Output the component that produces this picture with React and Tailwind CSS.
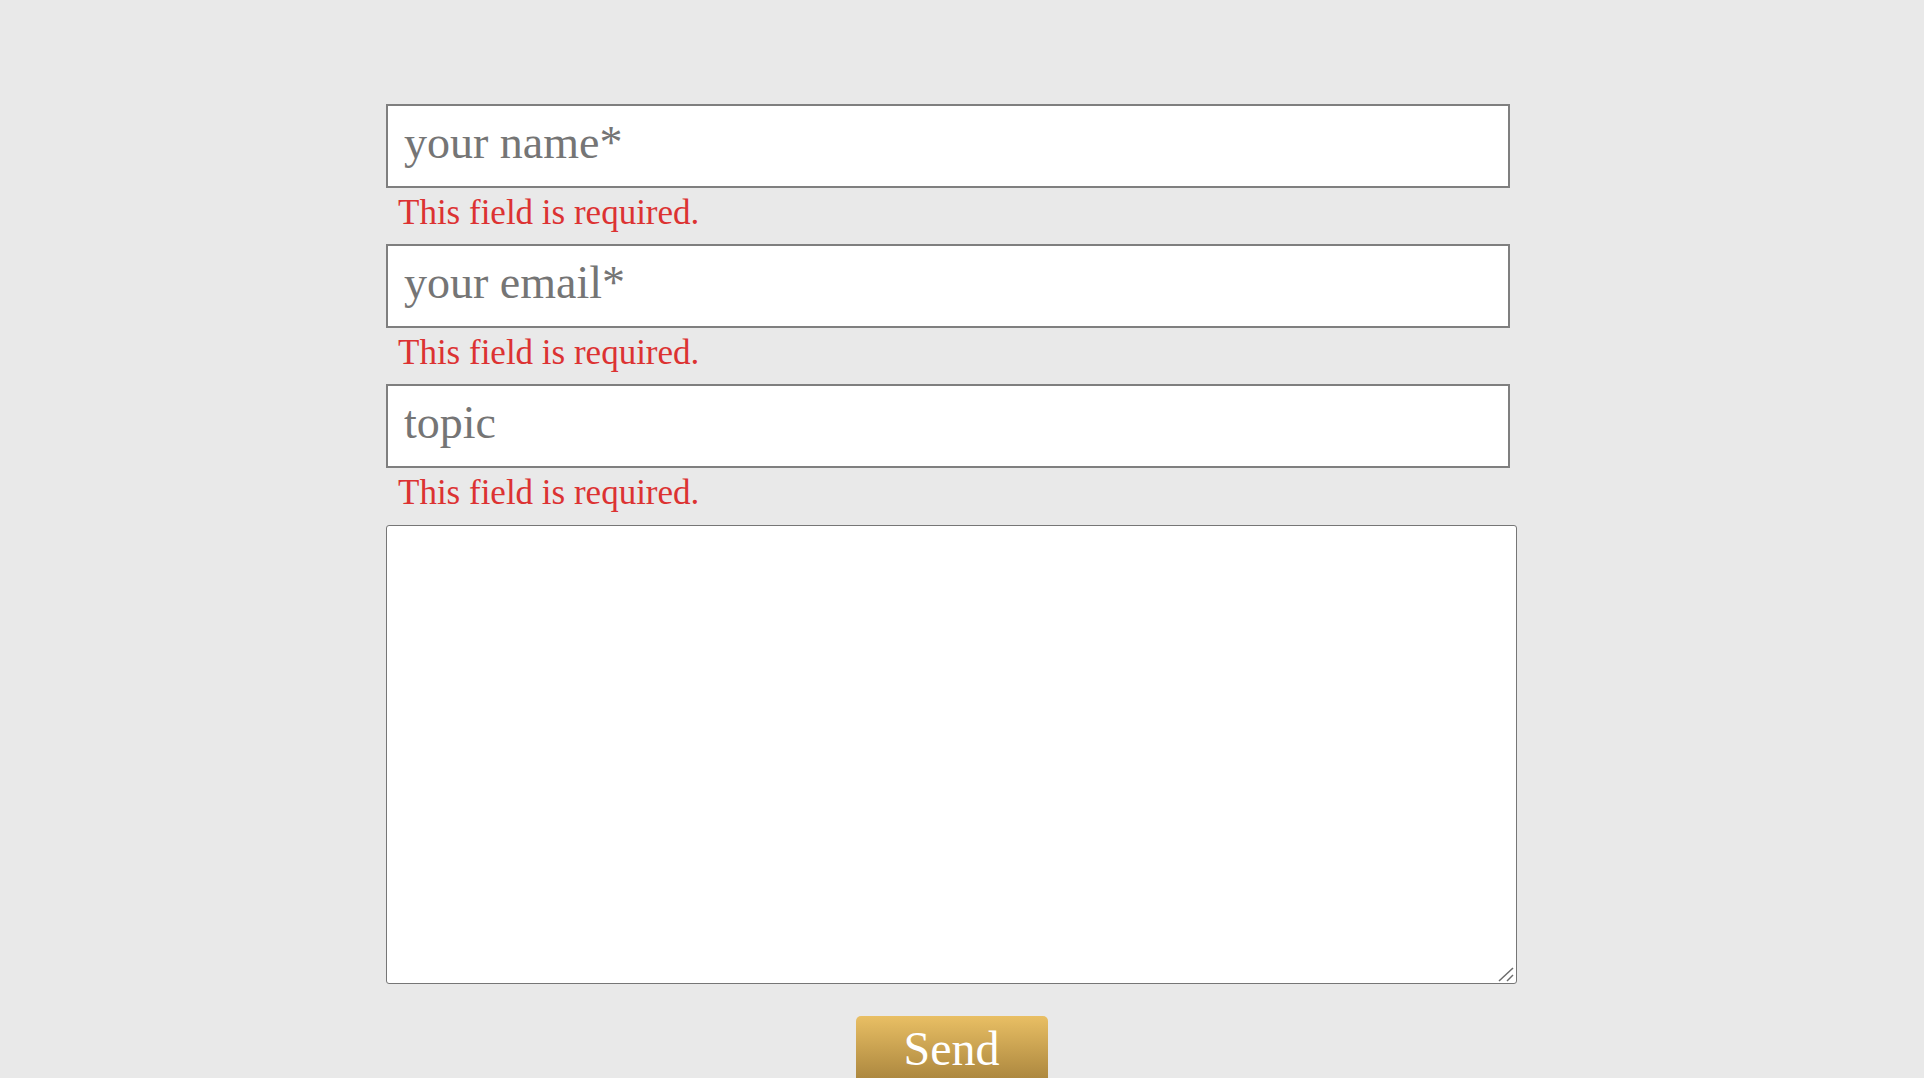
function Field({ ph, last }) {
  return (
    <div>
      <input
        type="text"
        placeholder={ph}
        className="block w-[1124px] h-[84px] box-border border-2 border-[#7f7f7f] bg-white pl-[16px] pr-4 pt-0 pb-[7px] font-['Liberation_Serif','Times_New_Roman',serif] text-[46px] text-[#757575] placeholder:text-[#757575] outline-none"
      />
      <div
        className={
          last
            ? "h-[57px] pl-[12px] pt-[5px] font-['Liberation_Serif','Times_New_Roman',serif] text-[35px] leading-[40px] text-[#dc3232]"
            : "h-[56px] pl-[12px] pt-[5px] font-['Liberation_Serif','Times_New_Roman',serif] text-[35px] leading-[40px] text-[#dc3232]"
        }
      >
        This field is required.
      </div>
    </div>
  );
}

export default function App() {
  return (
    <div className="min-h-[1078px] w-full bg-[#e9e9e9] pt-[104px] overflow-hidden">
      <div className="ml-[386px] w-[1131px] flex flex-col">
        <Field ph="your name*" />
        <Field ph="your email*" />
        <Field ph="topic" last />
        <div className="relative w-[1131px] h-[459px]">
          <textarea className="block w-full h-full border border-[#767676] rounded-[3px] bg-white p-2 resize-none outline-none font-['Liberation_Serif','Times_New_Roman',serif]" />
          <svg
            className="absolute right-[2px] bottom-[2px] w-[17px] h-[15px] pointer-events-none"
            viewBox="0 0 17 15"
          >
            <line x1="1" y1="14" x2="15" y2="1" stroke="#6b6b6b" strokeWidth="1.5" />
            <line x1="9" y1="14" x2="15" y2="8" stroke="#6b6b6b" strokeWidth="1.5" />
          </svg>
        </div>
        <div className="flex justify-center mt-[32px]">
          <button className="w-[192px] h-[72px] rounded-[5px] bg-gradient-to-b from-[#e9bf64] to-[#a4803a] text-white font-['Liberation_Serif','Times_New_Roman',serif] text-[48px] leading-[48px] pt-[9px] flex justify-center items-start">
            Send
          </button>
        </div>
      </div>
    </div>
  );
}
